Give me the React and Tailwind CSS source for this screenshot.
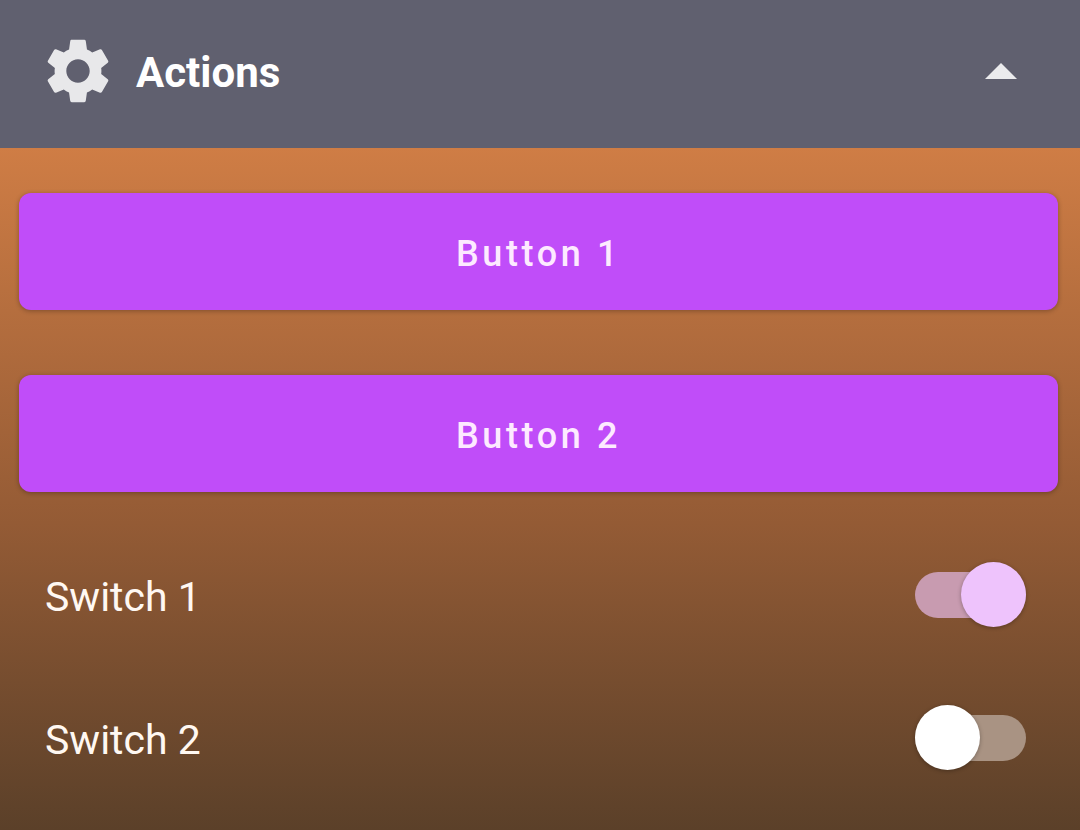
import { useState } from "react";
import { MdSettings } from "react-icons/md";

function ActionButton({ children }) {
  return (
    <button
      type="button"
      className="h-[117px] w-full rounded-xl bg-[#c04df9] pt-[5px] text-4xl font-medium tracking-widest text-[#fdeaff] shadow-[0_1px_5px_rgba(0,0,0,0.3)]"
    >
      {children}
    </button>
  );
}

function SwitchRow({ id, label, defaultChecked }) {
  return (
    <div className="flex h-[143px] items-center justify-between pr-[54px] pl-[45px]">
      <label htmlFor={id} className="pt-1 text-[41px] leading-[48px] text-[#fff8f2]">
        {label}
      </label>
      <input
        id={id}
        type="checkbox"
        role="switch"
        defaultChecked={defaultChecked}
        className="relative h-[46px] w-[111px] appearance-none rounded-full bg-[#a99383] before:absolute before:-top-[10px] before:left-0 before:size-[65px] before:rounded-full before:bg-white before:shadow-[0_1px_4px_rgba(0,0,0,0.3)] before:content-[''] checked:bg-[#c89bb0] checked:before:left-[46px] checked:before:bg-[#eec3fc]"
      />
    </div>
  );
}

export default function App() {
  const [open, setOpen] = useState(true);

  return (
    <main className="flex min-h-screen flex-col bg-[#5c4029] font-['Roboto',sans-serif]">
      <h1>
        <button
          type="button"
          aria-expanded={open}
          onClick={() => setOpen(!open)}
          className="flex h-[148px] w-full items-center bg-[#60606f] pr-[63px] pb-[7px] pl-[39px] text-left"
        >
          <MdSettings className="size-[78px] shrink-0 text-[#e8e8ea]" aria-hidden="true" />
          <span className="ml-[19px] flex-1 pt-1 text-[42px] leading-[48px] font-bold text-white">Actions</span>
          <svg viewBox="0 0 32 16" className={open ? "h-4 w-8 fill-[#ebebed]" : "h-4 w-8 rotate-180 fill-[#ebebed]"} aria-hidden="true">
            <path d="M0 16 16 0l16 16z" />
          </svg>
        </button>
      </h1>
      {open && (
        <section className="flex-1 bg-linear-to-b from-[#cf7d45] via-[#945b35] via-55% to-[#5b4029] pt-[45px]">
          <div className="mb-[31px] flex flex-col gap-[65px] pr-[22px] pl-[19px]">
            <ActionButton>Button 1</ActionButton>
            <ActionButton>Button 2</ActionButton>
          </div>
          <SwitchRow id="switch-1" label="Switch 1" defaultChecked />
          <SwitchRow id="switch-2" label="Switch 2" />
        </section>
      )}
    </main>
  );
}
